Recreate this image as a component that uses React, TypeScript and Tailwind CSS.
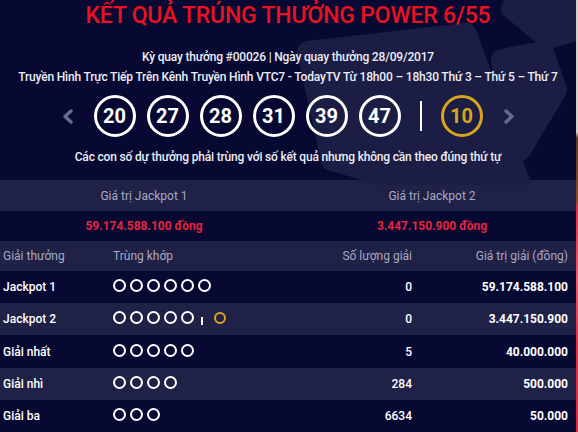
import React from "react";

const balls = ["20", "27", "28", "31", "39", "47"];

function Ring({ gold = false }: { gold?: boolean }) {
  return (
    <span
      className={
        gold
          ? "block w-[12px] h-[12px] rounded-full border-2 border-[#d9a51c]"
          : "block w-[13px] h-[13px] rounded-full border-2 border-white"
      }
    />
  );
}

function Rings({ n, extra = false }: { n: number; extra?: boolean }) {
  return (
    <div className="flex items-center gap-[4px] -mt-[3px]">
      {Array.from({ length: n }).map((_, i) => (
        <Ring key={i} />
      ))}
      {extra && (
        <>
          <span className="block w-[2px] h-[8px] bg-white ml-[3px] mt-[6px]" />
          <span className="ml-[7px]">
            <Ring gold />
          </span>
        </>
      )}
    </div>
  );
}

const rows = [
  { name: "Jackpot 1", n: 6, extra: false, qty: "0", val: "59.174.588.100" },
  { name: "Jackpot 2", n: 5, extra: true, qty: "0", val: "3.447.150.900" },
  { name: "Giải nhất", n: 5, extra: false, qty: "5", val: "40.000.000" },
  { name: "Giải nhì", n: 4, extra: false, qty: "284", val: "500.000" },
  { name: "Giải ba", n: 3, extra: false, qty: "6634", val: "50.000" },
];

function Chevron({ dir }: { dir: "l" | "r" }) {
  return (
    <svg width="12" height="15" viewBox="0 0 12 15" className="block">
      <polyline
        points={dir === "l" ? "9,2 3,7.5 9,13" : "3,2 9,7.5 3,13"}
        fill="none"
        stroke="#676b8d"
        strokeWidth="3.4"
        strokeLinecap="round"
        strokeLinejoin="round"
      />
    </svg>
  );
}

export default function App() {
  return (
    <div className="w-[578px] h-[432px] overflow-hidden flex bg-[#070933] font-['Roboto',sans-serif]">
      <div className="w-[576px] flex flex-col">
        <div className="relative h-[185px]">
          <svg
            className="absolute inset-0"
            width="576"
            height="185"
            viewBox="0 0 576 185"
          >
            <g fill="#1b1d45" stroke="#1b1d45" strokeWidth="22" strokeLinejoin="round">
              <polygon points="308,52 466,34 520,185 418,185 332,160" />
              <polygon points="512,8 576,-10 576,30 548,38" />
              <polygon points="502,60 543,52 556,90 520,150" />
            </g>
            <rect x="405" y="176" width="125" height="9" fill="#1b1d45" />
          </svg>
          <div className="relative flex flex-col items-center">
            <div className="pt-[2px] h-[30px] text-[23px] leading-[28px] font-medium tracking-[-0.2px] text-[#ea1120]">
              KẾT QUẢ TRÚNG THƯỞNG POWER 6/55
            </div>
            <div className="mt-[17px] text-[12px] leading-[20px] font-medium tracking-[-0.18px] text-[#eceef5]">
              Kỳ quay thưởng #00026 | Ngày quay thưởng 28/09/2017
            </div>
            <div className="text-[12px] leading-[20px] font-medium tracking-[-0.18px] text-[#eceef5]">
              Truyền Hình Trực Tiếp Trên Kênh Truyền Hình VTC7 - TodayTV Từ 18h00 – 18h30 Thứ 3 – Thứ 5 – Thứ 7
            </div>
            <div className="mt-[8px] h-[42px] flex items-center">
              <Chevron dir="l" />
              <div className="ml-[20px] flex gap-[11px]">
                {balls.map((b) => (
                  <div
                    key={b}
                    className="w-[42px] h-[42px] rounded-full border-[3px] border-white flex items-center justify-center text-[20px] font-bold text-white"
                  >
                    {b}
                  </div>
                ))}
              </div>
              <span className="block w-[2px] h-[30px] bg-white mx-[19px]" />
              <div className="w-[42px] h-[42px] rounded-full border-[3px] border-[#d9a51c] flex items-center justify-center text-[20px] font-bold text-[#d9a51c]">
                10
              </div>
              <div className="ml-[20px]">
                <Chevron dir="r" />
              </div>
            </div>
            <div className="mt-[10px] text-[12px] leading-[20px] font-medium tracking-[-0.18px] text-[#eceef5]">
              Các con số dự thưởng phải trùng với số kết quả nhưng không cần theo đúng thứ tự
            </div>
          </div>
        </div>

        <div className="grid grid-cols-2 h-[31px] bg-[#1f2147] text-[12px] text-[#a7abc1] items-center text-center">
          <div>Giá trị Jackpot 1</div>
          <div>Giá trị Jackpot 2</div>
        </div>
        <div className="grid grid-cols-2 h-[31px] bg-[#070933] text-[12px] font-bold text-[#e5243d] items-center text-center">
          <div>59.174.588.100 đồng</div>
          <div>3.447.150.900 đồng</div>
        </div>
        <div className="grid grid-cols-[113px_200px_99px_1fr] h-[31px] bg-[#1f2147] text-[12px] text-[#a7abc1] items-center">
          <div className="pl-[3px]">Giải thưởng</div>
          <div>Trùng khớp</div>
          <div className="text-right">Số lượng giải</div>
          <div className="text-right pr-[8px]">Giá trị giải (đồng)</div>
        </div>
        {rows.map((r, i) => (
          <div
            key={r.name}
            className={
              "grid grid-cols-[113px_200px_99px_1fr] h-[33px] text-[12px] text-white items-center " +
              (i % 2 === 0 ? "bg-[#070933]" : "bg-[#1f2147]")
            }
          >
            <div className="pl-[3px] font-medium">{r.name}</div>
            <Rings n={r.n} extra={r.extra} />
            <div className="text-right font-medium">{r.qty}</div>
            <div className="text-right pr-[8px] font-bold">{r.val}</div>
          </div>
        ))}
      </div>
      <div className="w-[2px] h-full bg-[linear-gradient(to_bottom,#d6d0ca_0px,#d6d0ca_132px,#5c3a2a_138px,#8a4a22_200px,#e0304a_208px,#f05a6c_280px,#e23248_340px,#d82a40_432px)]" />
    </div>
  );
}
